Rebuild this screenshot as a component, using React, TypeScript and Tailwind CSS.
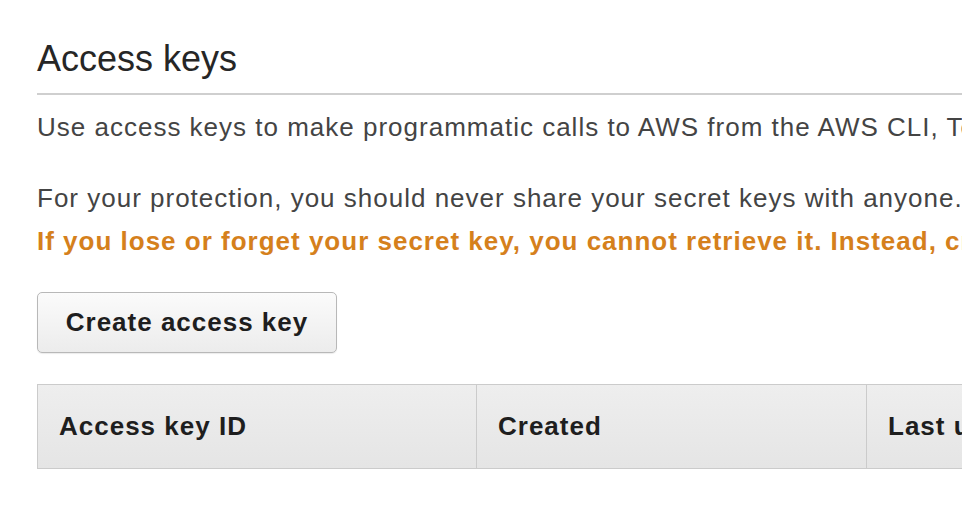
const columns = [
  { label: "Access key ID", width: "w-[438px]" },
  { label: "Created", width: "w-[390px]" },
  { label: "Last used", width: "w-[300px]" },
];

export default function App() {
  return (
    <div className="w-[962px] h-[511px] overflow-hidden bg-white font-['Liberation_Sans',Arial,sans-serif]">
      <div className="pl-[37px] pt-[38px] whitespace-nowrap">
        <h1 className="text-[36px] leading-[42px] text-[#262626] pb-[13px] border-b-2 border-[#cfcfcf]">
          Access keys
        </h1>

        <p className="mt-[14px] text-[26px] leading-[36px] tracking-[1px] text-[#444]">
          Use access keys to make programmatic calls to AWS from the AWS CLI, Tools for PowerShell, the AWS SDKs, or direct AWS API calls.
        </p>

        <div className="mt-[32px] text-[26px] leading-[43px] tracking-[1px]">
          <p className="text-[#444]">
            For your protection, you should never share your secret keys with anyone. As a best practice, we recommend frequent key rotation.
          </p>
          <p className="font-bold text-[#d5801c]">
            If you lose or forget your secret key, you cannot retrieve it. Instead, create a new access key and make the old key inactive.
          </p>
        </div>

        <button className="mt-[29px] w-[300px] h-[61px] rounded-[5px] border border-[#b8b8b8] bg-gradient-to-b from-[#fbfbfb] to-[#ececec] text-[26px] tracking-[1px] font-bold text-[#1e1e1e] shadow-[0_1px_1px_rgba(0,0,0,0.08)]">
          Create access key
        </button>

        <div className="mt-[31px] flex h-[85px] border border-[#cbcbcb] bg-gradient-to-b from-[#eeeeee] to-[#e5e5e5] w-[1200px]">
          {columns.map((col, i) => (
            <div
              key={col.label}
              className={`${col.width} shrink-0 flex items-center pl-[21px] text-[26px] tracking-[1px] font-bold text-[#1e1e1e] ${
                i > 0 ? "border-l border-[#cbcbcb]" : ""
              }`}
            >
              {col.label}
            </div>
          ))}
        </div>
      </div>
    </div>
  );
}
